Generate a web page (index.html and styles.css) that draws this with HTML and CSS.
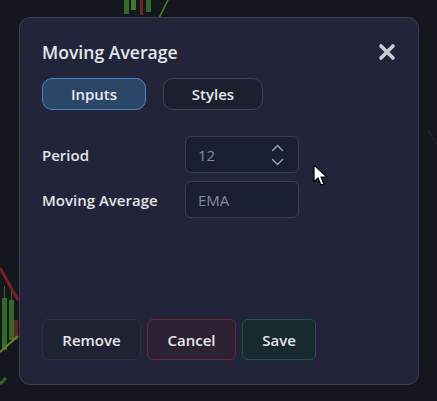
FILE: index.html
```html
<!DOCTYPE html>
<html>
<head>
<meta charset="utf-8">
<link rel="stylesheet" href="styles.css">
</head>
<body>
<svg class="chart" width="437" height="401" viewBox="0 0 437 401">
  <rect x="124" y="0" width="5" height="14" fill="#356a26"/>
  <rect x="131" y="0" width="5" height="10" fill="#3f7a2c"/>
  <rect x="140" y="0" width="3" height="15" fill="#6a2626"/>
  <rect x="146" y="0" width="5" height="12" fill="#356a26"/>
  <line x1="168" y1="0" x2="158" y2="20" stroke="#4f7a26" stroke-width="1.5"/>
  <line x1="0" y1="268" x2="18" y2="300" stroke="#7a2020" stroke-width="3"/>
  <rect x="2" y="298" width="5" height="52" fill="#356a26"/>
  <rect x="9" y="300" width="5" height="40" fill="#356a26"/>
  <rect x="4" y="286" width="1" height="20" fill="#356a26"/>
  <rect x="11" y="290" width="1" height="14" fill="#356a26"/>
  <rect x="14" y="320" width="4" height="20" fill="#5e2626"/>
  <line x1="0" y1="352" x2="18" y2="336" stroke="#6f7f26" stroke-width="2"/>
  <line x1="0" y1="384" x2="6" y2="378" stroke="#356a26" stroke-width="3"/>
  <line x1="428" y1="130" x2="437" y2="145" stroke="#2a2d36" stroke-width="1"/>
</svg>
<div class="stage">
  <div class="dialog">
    <div class="header">
      <h1 class="title">Moving Average</h1>
      <svg class="close" width="18" height="18" viewBox="0 0 18 18">
        <path d="M3 3 L15 15 M15 3 L3 15" stroke="#c6cbd5" stroke-width="3.6" stroke-linecap="round"/>
      </svg>
    </div>
    <div class="tabs">
      <div class="tab tab-active">Inputs</div>
      <div class="tab tab-plain">Styles</div>
    </div>
    <div class="fields">
      <div class="row">
        <div class="label">Period</div>
        <div class="input">
          <span class="value">12</span>
          <svg class="spin" width="13" height="24" viewBox="0 0 13 24">
            <path d="M1.5 7.5 L6.5 2.5 L11.5 7.5" fill="none" stroke="#a0a6b3" stroke-width="1.4" stroke-linecap="round" stroke-linejoin="round"/>
            <path d="M1.5 16.5 L6.5 21.5 L11.5 16.5" fill="none" stroke="#a0a6b3" stroke-width="1.4" stroke-linecap="round" stroke-linejoin="round"/>
          </svg>
        </div>
      </div>
      <div class="row">
        <div class="label">Moving Average</div>
        <div class="input"><span class="value">EMA</span></div>
      </div>
    </div>
    <div class="footer">
      <div class="btn btn-remove">Remove</div>
      <div class="btn btn-cancel">Cancel</div>
      <div class="btn btn-save">Save</div>
    </div>
  </div>
</div>
<svg class="cursor" width="18" height="24" viewBox="0 0 18 24">
  <path d="M1 1 L1 18 L5 14 L8 21 L11 20 L8 13 L14 13 Z" fill="#ffffff" stroke="#000000" stroke-width="1.2" stroke-linejoin="round"/>
</svg>
</body>
</html>
```
FILE: styles.css
```css
html, body {
  margin: 0;
  padding: 0;
}
body {
  width: 437px;
  height: 401px;
  background: #15171e;
  font-family: "Open Sans", "Noto Sans", sans-serif;
  position: relative;
  overflow: hidden;
}
.chart {
  position: absolute;
  left: 0;
  top: 0;
}
.stage {
  position: relative;
  padding: 17px 0 0 19px;
}
.dialog {
  width: 400px;
  height: 368px;
  box-sizing: border-box;
  background: #22253a;
  border: 1px solid #3b3f52;
  border-radius: 11px;
  padding: 21px 22px 24px 22px;
  display: flex;
  flex-direction: column;
}
.header {
  display: flex;
  justify-content: space-between;
  align-items: center;
}
.title {
  margin: 0;
  font-size: 17.6px;
  line-height: 26px;
  font-weight: 600;
  color: #e4e5ea;
}
.close {
  margin-top: 0;
}
.tabs {
  display: flex;
  gap: 17px;
  margin-top: 13px;
}
.tab {
  height: 32px;
  box-sizing: border-box;
  border-radius: 10px;
  border: 1px solid #3d4154;
  background: #1c1f2f;
  color: #e8e9ee;
  font-size: 15px;
  font-weight: 600;
  display: flex;
  align-items: center;
  justify-content: center;
}
.tab-active {
  width: 104px;
  background: #2c4668;
  border: 1.5px solid #4a86c2;
}
.tab-plain {
  width: 100px;
}
.fields {
  margin-top: 26px;
  display: flex;
  flex-direction: column;
  gap: 8px;
}
.row {
  display: flex;
  align-items: center;
}
.label {
  width: 143px;
  font-size: 15px;
  font-weight: 600;
  color: #e2e3e8;
}
.input {
  width: 114px;
  height: 37px;
  box-sizing: border-box;
  background: #1a1e31;
  border: 1px solid #393e54;
  border-radius: 6px;
  display: flex;
  align-items: center;
  justify-content: space-between;
  padding: 0 14px 0 12px;
}
.value {
  font-size: 15px;
  color: #858b9b;
}
.spin {
  display: block;
}
.footer {
  margin-top: auto;
  display: flex;
  gap: 6px;
}
.btn {
  height: 41px;
  box-sizing: border-box;
  border-radius: 6px;
  font-size: 15px;
  font-weight: 600;
  color: #e6e7ec;
  display: flex;
  align-items: center;
  justify-content: center;
}
.btn-remove {
  width: 99px;
  background: #1f2233;
  border: 1px solid #2c3042;
}
.btn-cancel {
  width: 89px;
  background: #2c2233;
  border: 1px solid #6a2b38;
}
.btn-save {
  width: 74px;
  background: #172a30;
  border: 1px solid #1f5a50;
}
.cursor {
  position: absolute;
  left: 313px;
  top: 164px;
}
```
